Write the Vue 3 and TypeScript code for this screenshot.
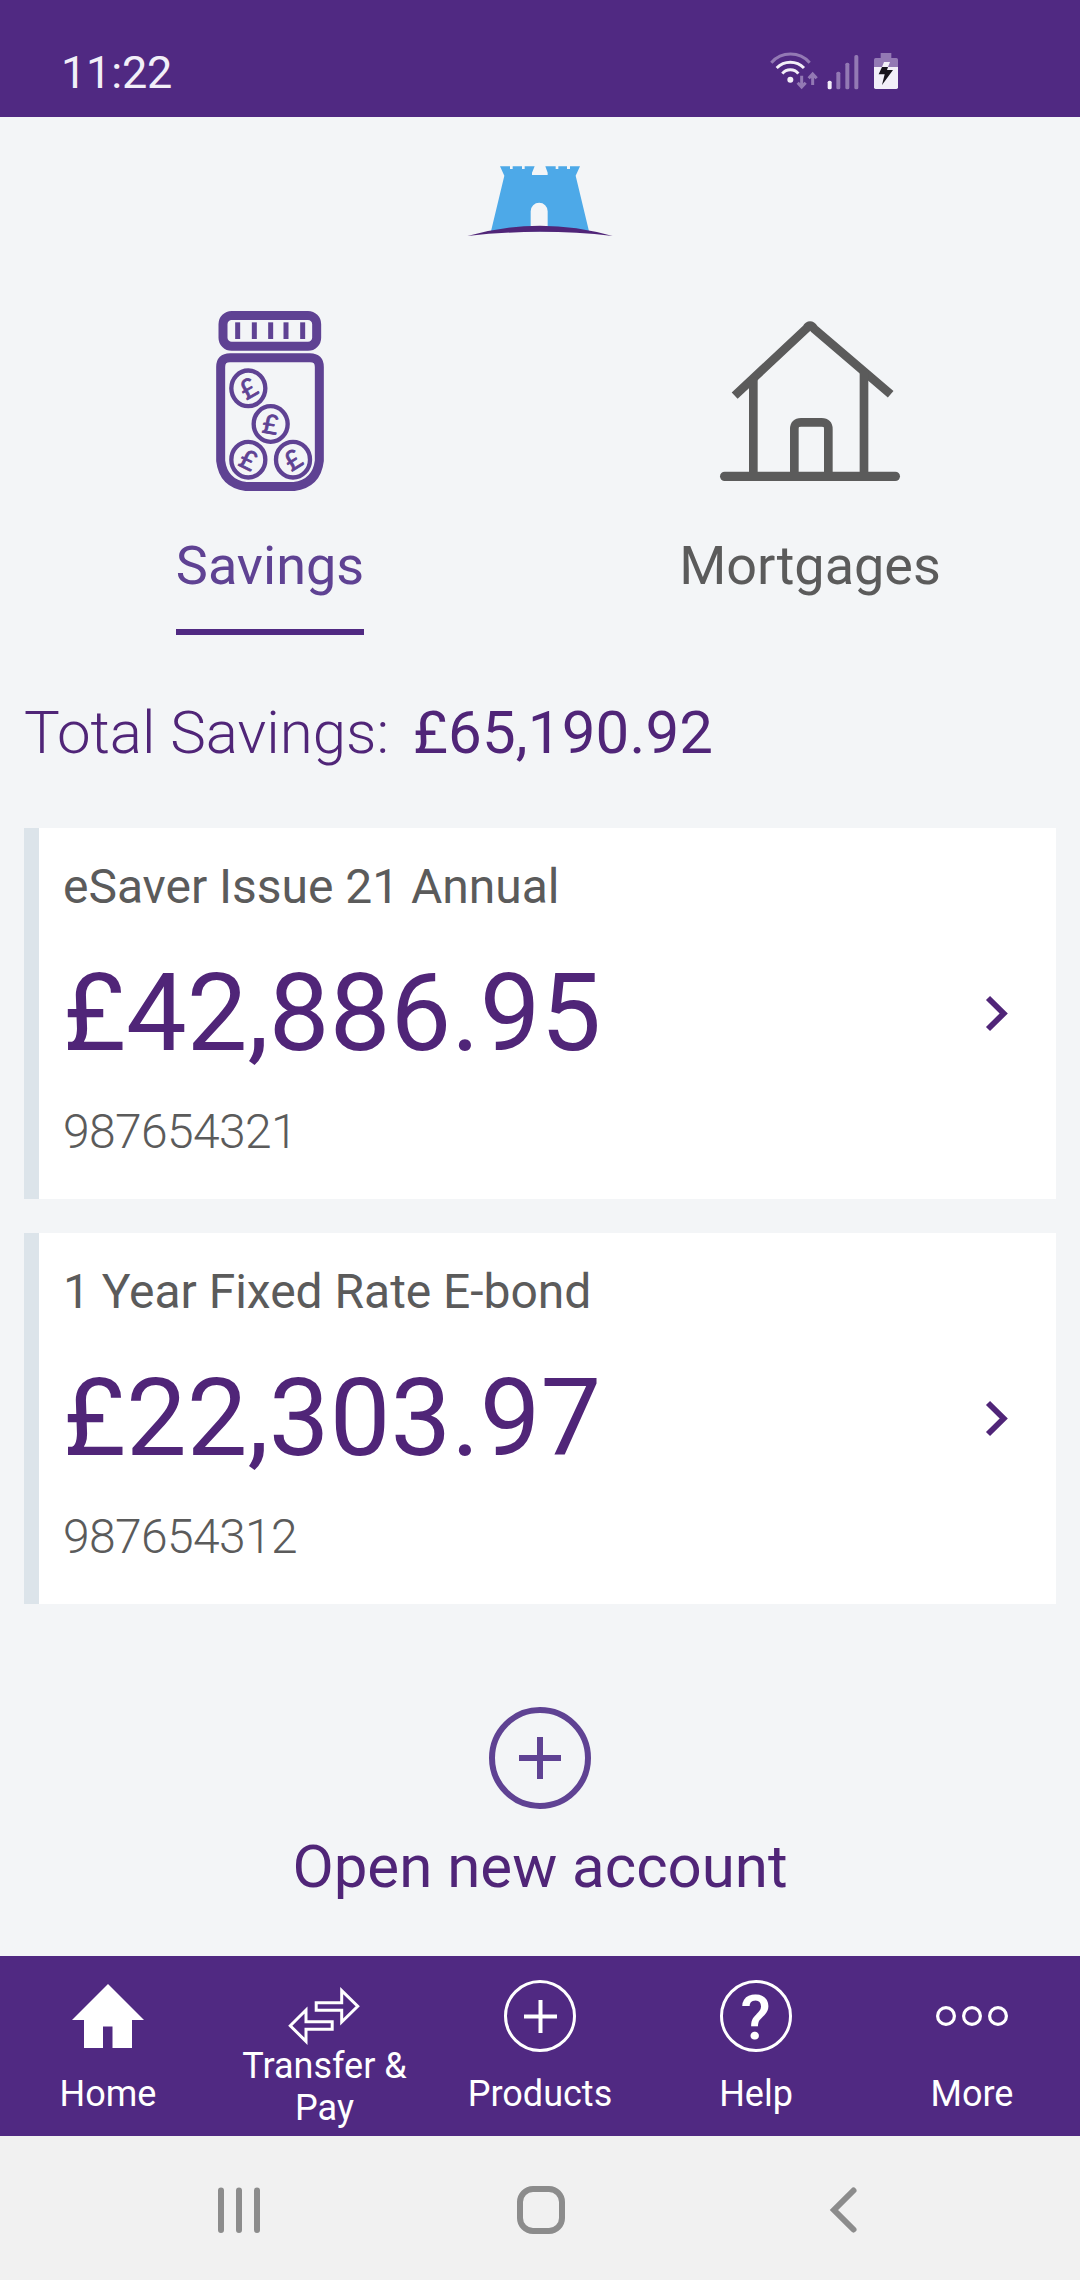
<script setup lang="ts">
interface Account {
  name: string
  balance: string
  number: string
}

interface Coin {
  x: number
  y: number
  tilt: number
}

const accounts: Account[] = [
  { name: 'eSaver Issue 21 Annual', balance: '£42,886.95', number: '987654321' },
  { name: '1 Year Fixed Rate E-bond', balance: '£22,303.97', number: '987654312' },
]

const coins: Coin[] = [
  { x: 175, y: 295, tilt: -30 },
  { x: 242, y: 402, tilt: 10 },
  { x: 175, y: 509, tilt: 26 },
  { x: 309, y: 509, tilt: -32 },
]

const slats: number[] = [143, 193, 242, 288, 338]
</script>

<template>
  <div class="screen">
    <header class="status">
      <span class="clock">11:22</span>
      <svg class="status-icons" viewBox="0 0 600 270">
        <g fill="none" stroke-width="9">
          <path class="dim-line" d="M94 98A77 77 0 0 1 209 98" />
          <path class="lit-line" d="M110 114A58 58 0 0 1 192 114" />
          <path class="lit-line" d="M127 131A31 31 0 0 1 175 131" />
          <path class="dim-line" d="M185 137V170M173 158L185 171L197 158M218 165V133M206 145L218 132L230 145" />
        </g>
        <circle class="lit" cx="151" cy="149" r="9" />
        <rect class="lit" x="263" y="152" width="12" height="26" rx="5" />
        <rect class="dim" x="289" y="125" width="12" height="53" rx="5" />
        <rect class="dim" x="316" y="98" width="12" height="80" rx="5" />
        <rect class="dim" x="343" y="75" width="12" height="103" rx="5" />
        <path class="dim" d="M422 69H454V84H469Q474 84 474 89V111H402V89Q402 84 407 84H422Z" />
        <path class="lit" d="M402 111H474V172Q474 177 469 177H407Q402 177 402 172Z" />
        <path class="lit" d="M432 96H450L444 111H426Z" />
        <path fill="#17141c" d="M426 111H444L441 120H459L426 165L434 133H416Z" />
      </svg>
    </header>

    <main class="content">
      <svg class="logo" viewBox="0 0 600 330">
        <path
          fill="#4da9e8"
          fill-rule="evenodd"
          d="M180 79H210V87H218V79H246V87H254V79H284L276 98V105H323V98L316 79H347V87H355V79H381V87H390V79H420L407 107L447 274H153L193 107ZM272 262H323V214A25.500 25.500 0 0 0 272 214Z"
        />
        <path fill="#502578" d="M82 288Q300 226 518 288Q300 263 82 288Z" />
      </svg>

      <nav class="tabs">
        <div class="tab active">
          <div class="tab-icon">
            <svg class="jar" viewBox="0 0 480 660">
              <g fill="none" stroke="#5f4293" stroke-width="27">
                <rect x="99" y="76.500" width="281" height="92.500" rx="26" />
                <path d="M120 203H360Q388 203 388 231V512Q380 580 312 589.500H168Q100 580 92 512V231Q92 203 120 203Z" />
              </g>
              <rect v-for="x in slats" :key="x" :x="x - 7.500" y="97" width="15" height="50" fill="#5f4293" />
              <g v-for="coin in coins" :key="coin.x + '-' + coin.y" :transform="`translate(${coin.x} ${coin.y})`">
                <ellipse rx="51" ry="53.500" fill="none" stroke="#5f4293" stroke-width="13" />
                <text class="pound" :transform="`rotate(${coin.tilt})`" x="0" y="29">£</text>
              </g>
            </svg>
          </div>
          <span class="tab-label">Savings</span>
        </div>
        <div class="tab">
          <div class="tab-icon">
            <svg class="house" viewBox="0 0 720 600">
              <g fill="none" stroke="#5b5b5b" stroke-width="26">
                <path stroke-linejoin="round" d="M134 287L349 86Q360 68 372 86L602 283" />
                <path d="M190 232V520M522 212V520M313 520V387Q313 367 333 367H395Q415 367 415 387V520" />
                <path stroke-width="28" stroke-linecap="round" d="M104 529H616" />
              </g>
            </svg>
          </div>
          <span class="tab-label">Mortgages</span>
        </div>
      </nav>

      <p class="total">
        <span class="total-label">Total Savings:</span>
        <span class="total-value">£65,190.92</span>
      </p>

      <section class="accounts">
        <article v-for="account in accounts" :key="account.number" class="card">
          <div class="card-text">
            <span class="name">{{ account.name }}</span>
            <span class="balance">{{ account.balance }}</span>
            <span class="number">{{ account.number }}</span>
          </div>
          <svg class="chevron" viewBox="0 0 24 38">
            <path d="M3 3L18.700 18.500L3 34" fill="none" stroke="#502578" stroke-width="5.800" />
          </svg>
        </article>
      </section>

      <div class="open-new">
        <svg class="open-icon" viewBox="0 0 102 102">
          <circle cx="51" cy="51" r="48" fill="none" stroke="#5f4293" stroke-width="6" />
          <path d="M30 51H72M51 30V72" stroke="#5f4293" stroke-width="6" />
        </svg>
        <span class="open-label">Open new account</span>
      </div>
    </main>

    <nav class="bottom">
      <div class="item">
        <svg class="item-icon" viewBox="0 0 72 72">
          <path fill="#fff" d="M36 4L72 40H60V68H40.500V46.500H31V68H12V40H0Z" />
        </svg>
        <span class="item-label">Home</span>
      </div>
      <div class="item">
        <svg class="item-icon" viewBox="0 0 72 72">
          <g fill="none" stroke="#fff" stroke-width="3">
            <path d="M28.200 22.800H53.700V10.600L69.700 26.300L53.700 42V30.200H28.200Z" />
            <path d="M44.200 49.200H18V61.400L2.300 45.700L18 30V41.800H44.200Z" />
          </g>
        </svg>
        <span class="item-label double">Transfer &amp;<br />Pay</span>
      </div>
      <div class="item">
        <svg class="item-icon" viewBox="0 0 72 72">
          <circle cx="36" cy="36" r="34.500" fill="none" stroke="#fff" stroke-width="3" />
          <path d="M20 36.500H53M36.500 20V53" stroke="#fff" stroke-width="4" />
        </svg>
        <span class="item-label">Products</span>
      </div>
      <div class="item">
        <svg class="item-icon" viewBox="0 0 72 72">
          <circle cx="36" cy="36" r="34.500" fill="none" stroke="#fff" stroke-width="3" />
          <text class="question" x="35.500" y="59">?</text>
        </svg>
        <span class="item-label">Help</span>
      </div>
      <div class="item">
        <svg class="item-icon" viewBox="0 0 72 72">
          <g fill="none" stroke="#fff" stroke-width="3.200">
            <circle cx="10" cy="36" r="8.400" />
            <circle cx="36" cy="36" r="8.400" />
            <circle cx="62" cy="36" r="8.400" />
          </g>
        </svg>
        <span class="item-label">More</span>
      </div>
    </nav>

    <footer class="system">
      <svg viewBox="0 0 48 48"><path d="M6 4.500V44M24 4.500V44M42 4.500V44" /></svg>
      <svg viewBox="0 0 48 48"><rect x="3" y="3" width="42" height="42" rx="13" /></svg>
      <svg viewBox="0 0 48 48"><path d="M34.500 4.500L15 24L34.500 43.500" /></svg>
    </footer>
  </div>
</template>

<style>
body {
  margin: 0;
}
</style>

<style scoped>
.screen {
  width: 1080px;
  height: 2280px;
  display: flex;
  flex-direction: column;
  overflow: hidden;
  background: #f3f5f7;
  font-family: Roboto, 'Liberation Sans', sans-serif;
  color: #5b5b5b;
}
svg {
  display: block;
  flex: none;
  overflow: visible;
}
.status {
  height: 117px;
  display: flex;
  justify-content: space-between;
  box-sizing: border-box;
  padding: 0 140px 0 61px;
  background: #502982;
}
.clock {
  margin-top: 46px;
  font-size: 45px;
  line-height: 53px;
  letter-spacing: -0.2px;
  color: #f2eff8;
}
.status-icons {
  width: 200px;
  height: 90px;
  margin-top: 30px;
}
.lit {
  fill: #f2eff8;
}
.dim {
  fill: #9379b4;
}
.lit-line {
  stroke: #f2eff8;
}
.dim-line {
  stroke: #9379b4;
}
.content {
  flex: 1;
  display: flex;
  flex-direction: column;
}
.logo {
  width: 200px;
  height: 110px;
  margin: 23px auto 0;
}
.tabs {
  display: flex;
  margin-top: 40px;
}
.tab {
  flex: 1;
  display: flex;
  flex-direction: column;
  align-items: center;
}
.tab-icon {
  height: 220px;
  display: flex;
  align-items: center;
}
.jar {
  width: 160px;
  height: 220px;
}
.house {
  width: 240px;
  height: 200px;
}
.pound {
  font: 400 80px Lato, sans-serif;
  text-anchor: middle;
  fill: #5f4293;
  stroke: #5f4293;
  stroke-width: 2.5;
}
.tab-label {
  margin-top: 24px;
  padding-bottom: 31px;
  border-bottom: 6px solid transparent;
  font-size: 54px;
  line-height: 64px;
}
.active .tab-label {
  color: #5f4293;
  border-color: #502982;
}
.total {
  display: flex;
  gap: 24px;
  margin: 63px 24px 0;
  font-size: 60px;
  line-height: 70px;
  color: #502578;
}
.total-label {
  font-weight: 300;
}
.total-value {
  letter-spacing: 0.15px;
}
.accounts {
  display: flex;
  flex-direction: column;
  gap: 34px;
  margin: 60px 24px 0;
}
.card {
  height: 371px;
  box-sizing: border-box;
  display: flex;
  justify-content: space-between;
  align-items: center;
  padding: 0 47px 0 24px;
  border-left: 15px solid #dce4ea;
  background: #fff;
}
.card-text {
  display: flex;
  flex-direction: column;
  align-self: flex-start;
  padding-top: 31px;
}
.name {
  font-size: 48px;
  line-height: 56px;
  letter-spacing: -0.03px;
}
.balance {
  margin-top: 35px;
  font-size: 108px;
  line-height: 126px;
  letter-spacing: 0.1px;
  color: #502578;
}
.number {
  margin-top: 28px;
  font-size: 48px;
  line-height: 56px;
  font-weight: 300;
  letter-spacing: -0.62px;
}
.chevron {
  width: 24px;
  height: 38px;
}
.open-new {
  display: flex;
  flex-direction: column;
  align-items: center;
  margin-top: 103px;
}
.open-icon {
  width: 102px;
  height: 102px;
}
.open-label {
  margin-top: 23px;
  font-size: 60px;
  line-height: 70px;
  color: #502578;
}
.bottom {
  height: 180px;
  display: flex;
  background: #502982;
  color: #fff;
}
.item {
  flex: 1;
  display: flex;
  flex-direction: column;
  align-items: center;
  padding-top: 24px;
}
.item-icon {
  width: 72px;
  height: 72px;
}
.item-label {
  margin-top: 21px;
  font-size: 36px;
  line-height: 42px;
  text-align: center;
}
.item-label.double {
  margin-top: -7px;
  padding-left: 1px;
}
.question {
  font: 500 62px Roboto, sans-serif;
  text-anchor: middle;
  fill: #fff;
}
.system {
  height: 94px;
  display: flex;
  gap: 254px;
  padding: 50px 0 0 215px;
  background: #f1f1f1;
}
.system svg {
  width: 48px;
  height: 48px;
  fill: none;
  stroke: #8c8c8c;
  stroke-width: 6;
  stroke-linecap: round;
}
</style>
